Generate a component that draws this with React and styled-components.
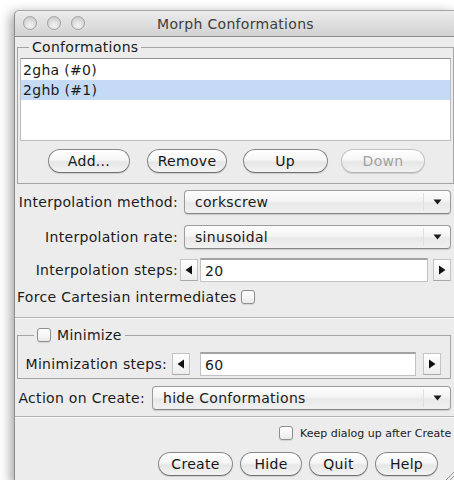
import React from 'react';
import styled, { createGlobalStyle } from 'styled-components';

const Global = createGlobalStyle`
  html, body { margin: 0; padding: 0; background: #ffffff; }
  body {
    font-family: "DejaVu Sans", "Liberation Sans", sans-serif;
    font-size: 14px;
    letter-spacing: 0.3px;
    color: #1b1b1b;
    overflow: hidden;
  }
`;

const Desk = styled.div`
  width: 454px;
  height: 480px;
  overflow: hidden;
  box-sizing: border-box;
  padding: 10px 0 0 14px;
`;

const Window = styled.div`
  position: relative;
  width: 441px;
  height: 472px;
  background: #ececec;
  border-left: 1px solid #8d8d8d;
  border-top: 1px solid #a6a6a6;
  border-radius: 5px 0 0 0;
  box-shadow: -3px 3px 12px rgba(0, 0, 0, 0.38);
  display: flex;
  flex-direction: column;
`;

const TitleBar = styled.div`
  position: relative;
  height: 25px;
  flex-shrink: 0;
  border-bottom: 1px solid #8e8e8e;
  border-radius: 5px 0 0 0;
  background: linear-gradient(#ececec, #dcdcdc 60%, #d2d2d2);
  display: flex;
  align-items: center;
  justify-content: center;
`;

const Lights = styled.div`
  position: absolute;
  left: 8px;
  top: 5px;
  display: flex;
  gap: 10px;
`;

const Light = styled.span`
  width: 14px;
  height: 14px;
  border-radius: 50%;
  box-sizing: border-box;
  border: 1px solid #a4a4a4;
  background: radial-gradient(circle at 50% 70%, #f4f4f4, #d2d2d2 70%, #c2c2c2);
`;

const Title = styled.span`
  font-size: 14px;
  color: #3d3d3d;
  letter-spacing: 0.3px;
`;

const Group = styled.fieldset`
  margin: ${p => p.$mt}px ${p => p.$mr}px 0 2px;
  padding: ${p => p.$pt}px ${p => p.$pr}px ${p => p.$pb}px 0;
  border: 1px solid #a3a3a3;
  min-width: 0;
`;

const Legend = styled.legend`
  margin-left: ${p => p.$ml}px;
  padding: 0 3px;
  line-height: 16px;
  height: 16px;
  display: flex;
  align-items: center;
  gap: 6px;
`;

const List = styled.div`
  margin-left: 2px;
  height: 80px;
  background: #ffffff;
  border: 1px solid #bdbdbd;
  border-top-color: #8f8f8f;
  padding-top: 1px;
`;

const Item = styled.div`
  height: 20px;
  line-height: 20px;
  padding-left: 2px;
  background: ${p => (p.$sel ? '#c5dbf5' : 'transparent')};
`;

const ButtonGrid = styled.div`
  display: grid;
  grid-template-columns: repeat(4, 98px);
  justify-items: center;
  padding-left: 22px;
  margin-top: 8px;
`;

const AquaButton = styled.button`
  width: ${p => p.$w}px;
  height: 24px;
  box-sizing: border-box;
  border-radius: 12px;
  border: 1px solid ${p => (p.disabled ? '#c2c2c2' : '#888888')};
  border-bottom-color: ${p => (p.disabled ? '#b4b4b4' : '#6f6f6f')};
  background: linear-gradient(#ffffff, #f6f6f6 45%, #e6e6e6 55%, #f3f3f3);
  box-shadow: 0 1px 1px rgba(0, 0, 0, 0.12);
  font-family: inherit;
  font-size: 14px;
  letter-spacing: 0.3px;
  color: ${p => (p.disabled ? '#a2a2a2' : '#161616')};
  padding: 0;
  line-height: 20px;
`;

const Row = styled.div`
  display: flex;
  align-items: center;
  height: ${p => p.$h}px;
  margin-top: ${p => p.$mt}px;
  padding-right: ${p => p.$pr || 0}px;
  padding-left: ${p => p.$pl || 0}px;
  justify-content: ${p => p.$end ? 'flex-end' : 'flex-start'};
`;

const Label = styled.span`
  width: ${p => p.$w}px;
  flex-shrink: 0;
  text-align: right;
  white-space: nowrap;
`;

const Select = styled.div`
  flex: 1;
  height: 24px;
  margin-left: ${p => p.$ml}px;
  box-sizing: border-box;
  border: 1px solid #9c9c9c;
  border-bottom-color: #858585;
  border-radius: 4px;
  background: linear-gradient(#fdfdfd, #f4f4f4 45%, #e8e8e8 55%, #f1f1f1);
  box-shadow: 0 1px 1px rgba(0, 0, 0, 0.14);
  display: flex;
  align-items: center;
  padding-left: 10px;
`;

const SelectText = styled.span`
  flex: 1;
`;

const SelectArrow = styled.span`
  width: 26px;
  height: 18px;
  border-left: 1px solid #e0e0e0;
  display: flex;
  align-items: center;
  justify-content: center;
`;

const Spinner = styled.div`
  flex: 1;
  display: flex;
  align-items: center;
  margin-left: ${p => p.$ml}px;
  height: 24px;
`;

const StepButton = styled.div`
  width: 18px;
  height: 22px;
  box-sizing: border-box;
  border: 1px solid #c4c4c4;
  border-bottom-color: #a9a9a9;
  background: linear-gradient(#ffffff, #ededed);
  display: flex;
  align-items: center;
  justify-content: center;
  margin-left: ${p => p.$ml || 0}px;
`;

const Field = styled.div`
  flex: 1;
  height: 24px;
  margin-left: ${p => p.$ml}px;
  box-sizing: border-box;
  background: #ffffff;
  border: 1px solid #c2c2c2;
  border-top: 2px solid #a3a3a3;
  display: flex;
  align-items: center;
  padding-left: 4px;
`;

const Box = styled.span`
  width: 14px;
  height: 14px;
  box-sizing: border-box;
  border: 1px solid #8e8e8e;
  border-radius: 3px;
  background: linear-gradient(#ffffff, #ececec);
  box-shadow: 0 1px 1px rgba(0, 0, 0, 0.1);
  margin-left: ${p => p.$ml || 0}px;
  margin-right: ${p => p.$mr || 0}px;
  flex-shrink: 0;
`;

const Rule = styled.div`
  margin-top: ${p => p.$mt}px;
  height: 1px;
  background: #b3b3b3;
  box-shadow: 0 1px 0 #fafafa;
`;

const SmallText = styled.span`
  font-size: 11px;
  letter-spacing: 0;
  white-space: nowrap;
`;

const Footer = styled.div`
  display: flex;
  justify-content: flex-end;
  gap: 7px;
  padding-right: 18px;
  margin-top: 10px;
`;

const Grip = styled.svg`
  position: absolute;
  right: 1px;
  bottom: 2px;
`;

const Triangle = ({ dir }) => (
  <svg width="8" height="10" viewBox="0 0 8 10">
    {dir === 'left'
      ? <path d="M7 0.5 L7 9.5 L0.5 5 Z" fill="#111" />
      : <path d="M1 0.5 L1 9.5 L7.5 5 Z" fill="#111" />}
  </svg>
);

const Down = () => (
  <svg width="9" height="6" viewBox="0 0 9 6">
    <path d="M0.5 0.5 L8.5 0.5 L4.5 5.5 Z" fill="#1a1a1a" />
  </svg>
);

const Dropdown = ({ value, ml }) => (
  <Select $ml={ml}>
    <SelectText>{value}</SelectText>
    <SelectArrow><Down /></SelectArrow>
  </Select>
);

const Stepper = ({ value, ml, fieldMl, rightMl }) => (
  <Spinner $ml={ml}>
    <StepButton><Triangle dir="left" /></StepButton>
    <Field $ml={fieldMl}>{value}</Field>
    <StepButton $ml={rightMl}><Triangle dir="right" /></StepButton>
  </Spinner>
);

export default function App() {
  return (
    <>
      <Global />
      <Desk>
        <Window>
          <TitleBar>
            <Lights>
              <Light /><Light /><Light />
            </Lights>
            <Title>Morph Conformations</Title>
          </TitleBar>

          <Group $mt={2} $mr={2} $pt={3} $pr={2} $pb={10}>
            <Legend $ml={11}>Conformations</Legend>
            <List>
              <Item>2gha (#0)</Item>
              <Item $sel>2ghb (#1)</Item>
            </List>
            <ButtonGrid>
              <AquaButton $w={82}>Add...</AquaButton>
              <AquaButton $w={80}>Remove</AquaButton>
              <AquaButton $w={85}>Up</AquaButton>
              <AquaButton $w={84} disabled>Down</AquaButton>
            </ButtonGrid>
          </Group>

          <Row $h={24} $mt={6} $pr={5}>
            <Label $w={163}>Interpolation method:</Label>
            <Dropdown value="corkscrew" ml={6} />
          </Row>
          <Row $h={24} $mt={11} $pr={5}>
            <Label $w={163}>Interpolation rate:</Label>
            <Dropdown value="sinusoidal" ml={6} />
          </Row>
          <Row $h={24} $mt={9} $pr={5}>
            <Label $w={163}>Interpolation steps:</Label>
            <Stepper value="20" ml={2} fieldMl={2} rightMl={5} />
          </Row>
          <Row $h={20} $mt={5} $pl={2}>
            <span>Force Cartesian intermediates</span>
            <Box $ml={4} />
          </Row>

          <Rule $mt={10} />

          <Group $mt={9} $mr={5} $pt={9} $pr={9} $pb={2}>
            <Legend $ml={16}>
              <Box />
              <span>Minimize</span>
            </Legend>
            <Row $h={24} $mt={0}>
              <Label $w={149}>Minimization steps:</Label>
              <Stepper value="60" ml={5} fieldMl={10} rightMl={7} />
            </Row>
          </Group>

          <Row $h={24} $mt={7} $pr={5}>
            <Label $w={130}>Action on Create:</Label>
            <Dropdown value="hide Conformations" ml={7} />
          </Row>

          <Rule $mt={6} />

          <Row $h={18} $mt={7} $pl={264}>
            <Box $mr={7} />
            <SmallText>Keep dialog up after Create</SmallText>
          </Row>

          <Footer>
            <AquaButton $w={75}>Create</AquaButton>
            <AquaButton $w={62}>Hide</AquaButton>
            <AquaButton $w={59}>Quit</AquaButton>
            <AquaButton $w={63}>Help</AquaButton>
          </Footer>

          <Grip width="12" height="12" viewBox="0 0 12 12">
            <path d="M11 3 L3 11 M11 7 L7 11" stroke="#9a9a9a" strokeWidth="1" />
          </Grip>
        </Window>
      </Desk>
    </>
  );
}
